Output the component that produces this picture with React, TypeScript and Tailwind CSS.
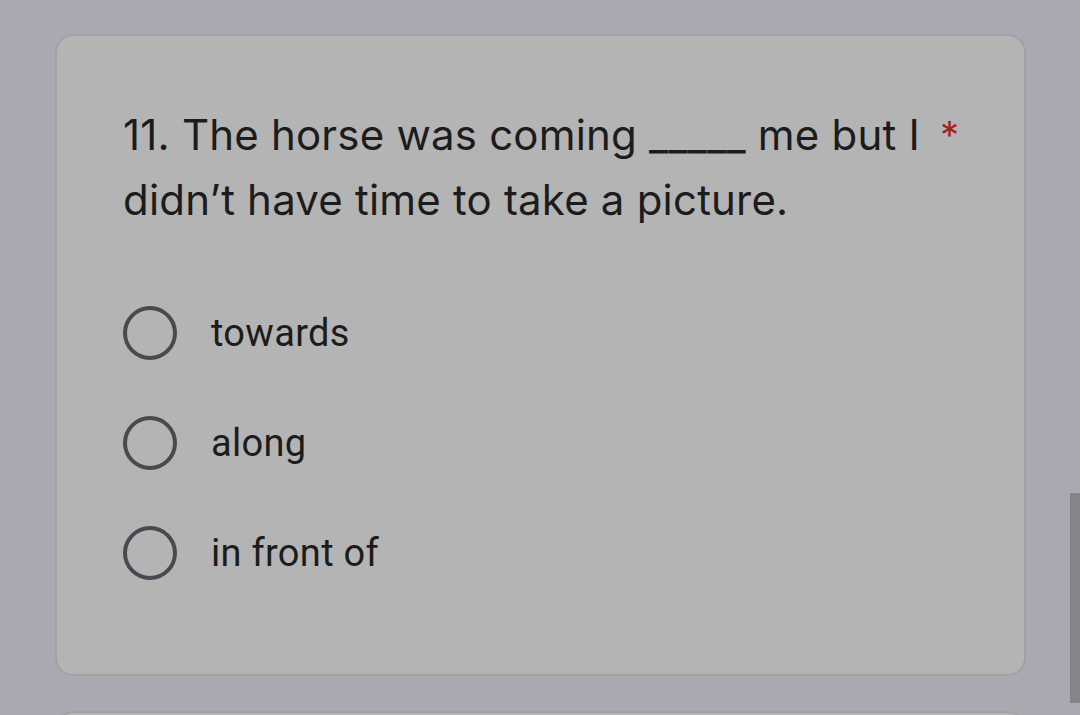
import React from 'react';

const options = ['towards', 'along', 'in front of'];

const Radio: React.FC = () => (
  <div className="w-[54px] h-[54px] rounded-full border-[4px] border-[#4a494f] shrink-0" />
);

export default function App() {
  return (
    <div className="relative h-[715px] overflow-hidden bg-[#aba8b2] pl-[55px] pr-[54px] pt-[34px]">
      {/* Question card */}
      <div className="rounded-[18px] border-2 border-[#a2a1a6] bg-[#b4b4b4] pl-[66px] pr-[40px] pt-[66px] pb-[94px]">
        <div className="flex items-start" style={{ fontFamily: 'Inter, "Open Sans", sans-serif' }}>
          <div className="whitespace-nowrap text-[42px] leading-[65px] text-[#1c1c1c] tracking-[0.2px]">
            11. The horse was coming _____ me but I
            <br />
            didn’t have time to take a picture.
          </div>
          <span className="ml-[20px] mt-[14px] text-[38px] leading-[38px] text-[#a5221d]">*</span>
        </div>

        <div className="mt-[74px] flex flex-col gap-[56px]" style={{ fontFamily: 'Roboto, "Liberation Sans", sans-serif' }}>
          {options.map((o) => (
            <div key={o} className="flex items-center gap-[34px] h-[54px]">
              <Radio />
              <span className="text-[38px] text-[#1c1c1c] tracking-[0.3px]">{o}</span>
            </div>
          ))}
        </div>
      </div>

      {/* Next card peeking */}
      <div className="mt-[35px] h-[40px] rounded-t-[18px] border-2 border-[#a2a1a6] bg-[#b4b4b4]" />

      {/* Scrollbar thumb */}
      <div className="absolute right-0 top-[493px] h-[210px] w-[10px] bg-[#86838b]" />
    </div>
  );
}
